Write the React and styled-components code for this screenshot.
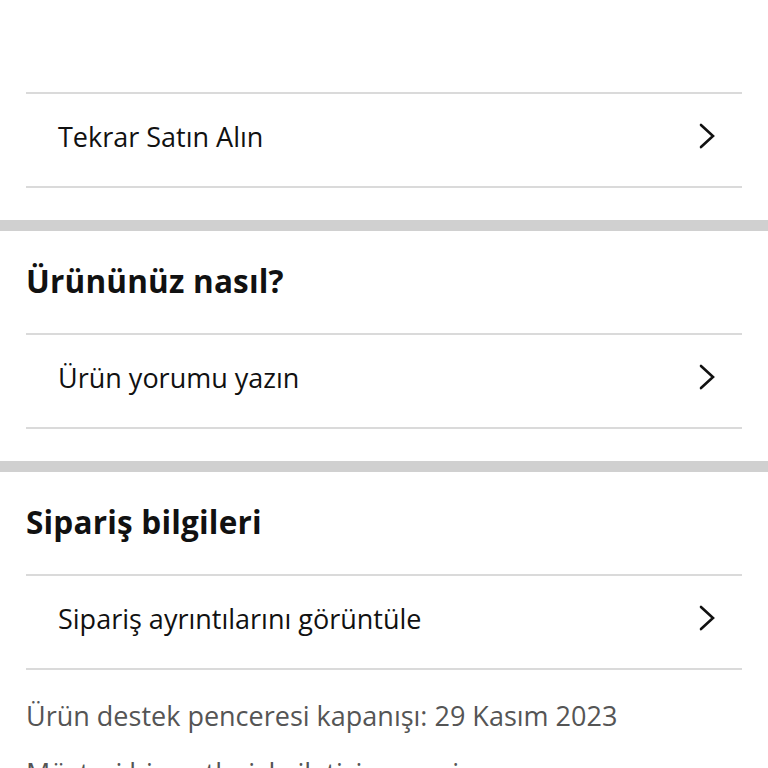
import React from "react";
import styled, { createGlobalStyle } from "styled-components";

const Global = createGlobalStyle`
  html, body { margin: 0; padding: 0; background: #fff; }
  body { font-family: "Open Sans", "Noto Sans", sans-serif; color: #111; }
`;

const Page = styled.div`
  width: 768px;
  height: 768px;
  overflow: hidden;
  background: #fff;
  display: flex;
  flex-direction: column;
`;

const TopSpace = styled.div`
  height: 92px;
  flex-shrink: 0;
`;

const Section = styled.section`
  display: flex;
  flex-direction: column;
  flex-shrink: 0;
`;

const Heading = styled.h2`
  margin: 0;
  height: 102px;
  padding: 0 26px 4px;
  display: flex;
  align-items: center;
  font-size: 31.5px;
  font-weight: 700;
  color: #111;
  letter-spacing: 0.2px;
  box-sizing: border-box;
`;

const Divider = styled.div`
  height: 2px;
  margin: 0 26px;
  background: #dadada;
`;

const Row = styled.div`
  height: 92px;
  box-sizing: border-box;
  padding: 0 50px 8px 58px;
  display: flex;
  align-items: center;
  justify-content: space-between;
  font-size: 27px;
  color: #111;
`;

const Gap = styled.div`
  height: 32px;
`;

const Band = styled.div`
  height: 11px;
  background: #d0d0d0;
`;

const Note = styled.div`
  padding: 0 26px;
  height: 46px;
  display: flex;
  align-items: center;
  font-size: 27px;
  color: #555;
  flex-shrink: 0;
  white-space: nowrap;
`;

const FirstNote = styled(Note)`
  margin-top: 22px;
`;

const NextNote = styled(Note)`
  margin-top: 11px;
`;

const Chevron = () => (
  <svg width="20" height="28" viewBox="0 0 20 28" fill="none">
    <path d="M3 3 L15 14 L3 25" stroke="#111" strokeWidth="2.6" strokeLinecap="round" strokeLinejoin="miter" />
  </svg>
);

const LinkRow = ({ children }) => (
  <>
    <Divider />
    <Row>
      <span>{children}</span>
      <Chevron />
    </Row>
    <Divider />
  </>
);

export default function App() {
  return (
    <Page>
      <Global />
      <TopSpace />
      <Section>
        <LinkRow>Tekrar Satın Alın</LinkRow>
        <Gap />
        <Band />
      </Section>
      <Section>
        <Heading>Ürününüz nasıl?</Heading>
        <LinkRow>Ürün yorumu yazın</LinkRow>
        <Gap />
        <Band />
      </Section>
      <Section>
        <Heading>Sipariş bilgileri</Heading>
        <LinkRow>Sipariş ayrıntılarını görüntüle</LinkRow>
      </Section>
      <FirstNote>Ürün destek penceresi kapanışı: 29 Kasım 2023</FirstNote>
      <NextNote>Müşteri hizmetleriyle iletişime geçin</NextNote>
    </Page>
  );
}
